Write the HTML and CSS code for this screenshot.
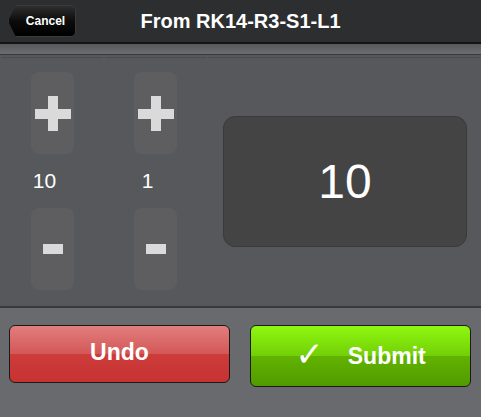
FILE: index.html
```html
<!DOCTYPE html>
<html lang="en">
<head>
    <meta charset="UTF-8">
    <meta name="viewport" content="width=device-width, initial-scale=1.0">
    <title>Pick Quantity</title>
    <link rel="stylesheet" href="styles.css">
</head>
<body>
    <header class="topbar">
        <div class="topbar-side">
            <button class="back-btn">Cancel</button>
        </div>
        <h1 class="title">From RK14-R3-S1-L1</h1>
        <div class="topbar-side"></div>
    </header>
    <div class="subbar"></div>

    <main class="picker">
        <!-- tens -->
        <div class="cell counter">
            <button class="step-btn" aria-label="+">
                <svg width="36" height="35" viewBox="0 0 36 35"><rect x="0" y="13" width="36" height="10" fill="#dadada"/><rect x="13" y="0" width="10" height="35" fill="#dadada"/></svg>
            </button>
            <div class="count">10</div>
            <button class="step-btn" aria-label="-">
                <svg width="20" height="10" viewBox="0 0 20 10"><rect width="20" height="10" fill="#dadada"/></svg>
            </button>
        </div>
        <!-- ones -->
        <div class="cell counter">
            <button class="step-btn" aria-label="+">
                <svg width="36" height="35" viewBox="0 0 36 35"><rect x="0" y="13" width="36" height="10" fill="#dadada"/><rect x="13" y="0" width="10" height="35" fill="#dadada"/></svg>
            </button>
            <div class="count">1</div>
            <button class="step-btn" aria-label="-">
                <svg width="20" height="10" viewBox="0 0 20 10"><rect width="20" height="10" fill="#dadada"/></svg>
            </button>
        </div>
        <div class="cell display-cell">
            <div class="display">10</div>
        </div>
    </main>

    <footer class="actions">
        <button class="action-btn undo">Undo</button>
        <button class="action-btn submit"><span class="check">&#10003;</span>Submit</button>
    </footer>
</body>
</html>
```

FILE: styles.css
```css
body {
    margin: 0;
    padding: 0;
    font-family: "Liberation Sans", Arial, sans-serif;
    background: #696a6e;
}

button {
    font-family: inherit;
    cursor: pointer;
}

/* Top bar */
.topbar {
    display: grid;
    grid-template-columns: 1fr auto 1fr;
    align-items: center;
    height: 42px;
    background: #2d2e30;
    border-bottom: 2px solid #141414;
}

.topbar-side {
    display: flex;
    align-items: center;
}

.title {
    margin: 0;
    color: white;
    font-size: 20px;
    font-weight: bold;
    margin-top: 1px;
}

.back-btn {
    margin-left: 8px;
    width: 68px;
    height: 32px;
    padding: 0 0 0 7px;
    border: 1px solid #3a3a3a;
    border-radius: 0 5px 5px 0;
    background: linear-gradient(#2e2e2e, #0c0c0c 50%, #000);
    color: white;
    font-size: 12px;
    font-weight: bold;
    clip-path: polygon(0 50%, 8px 0, 100% 0, 100% 100%, 8px 100%);
}

.subbar {
    height: 10px;
    background: linear-gradient(#59595c, #6b6c70);
    border-bottom: 1px solid #38393b;
}

/* Picker */
.picker {
    display: grid;
    grid-template-columns: 101px 101px 1fr;
    gap: 2px;
    padding: 2px 0 0 2px;
    height: 249px;
    background: #57585b;
    border-bottom: 2px solid #38393c;
}

.cell {
    border-top: 1px solid #4b4c4e;
}

.counter {
    display: flex;
    flex-direction: column;
    align-items: center;
    padding-top: 14px;
}

.step-btn {
    display: flex;
    justify-content: center;
    align-items: center;
    width: 43px;
    height: 82px;
    padding: 0;
    border: none;
    border-radius: 8px;
    background: #5e5e60;
}

.count {
    height: 54px;
    line-height: 54px;
    padding-right: 16px;
    color: white;
    font-size: 21px;
}

.display-cell {
    display: flex;
    align-items: center;
    padding: 0 14px 2px 15px;
}

.display {
    flex: 1;
    height: 129px;
    line-height: 129px;
    text-align: center;
    background: #444444;
    border: 1px solid #3a3a3a;
    border-radius: 12px;
    color: white;
    font-size: 48px;
}

/* Bottom actions */
.actions {
    display: grid;
    grid-template-columns: 1fr 1fr;
    align-items: start;
    gap: 20px;
    padding: 17px 10px 0 9px;
}

.action-btn {
    display: flex;
    justify-content: center;
    align-items: center;
    border: 1px solid #1a1a1a;
    border-radius: 6px;
    color: white;
    font-size: 23px;
    font-weight: bold;
    padding: 0;
}

.undo {
    height: 58px;
    padding-bottom: 4px;
    background: linear-gradient(#e27e7e, #d45757 50%, #cd3c3c 50%, #c73131);
}

.submit {
    height: 62px;
    background: linear-gradient(#8ff80f, #72cf07 50%, #62b300 50%, #509b00);
}

.check {
    font-family: "DejaVu Sans", sans-serif;
    font-weight: normal;
    font-size: 34px;
    margin-right: 24px;
    margin-top: -4px;
}
```
